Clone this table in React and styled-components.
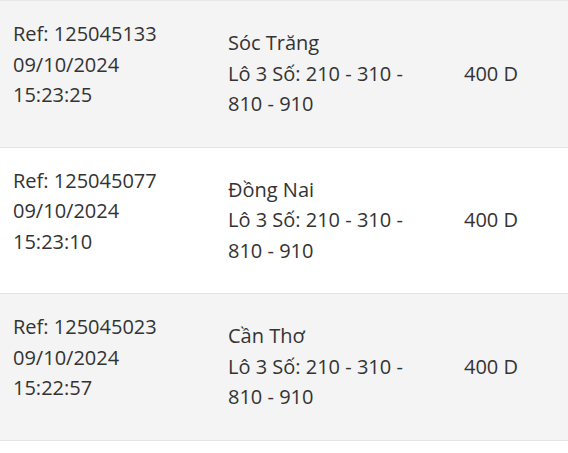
import styled, { createGlobalStyle } from "styled-components";

const GlobalStyle = createGlobalStyle`
  body {
    margin: 0;
    background: #ffffff;
    font-family: "Open Sans", "Liberation Sans", sans-serif;
  }
`;

const tickets = [
  {
    ref: "125045133",
    date: "09/10/2024",
    time: "15:23:25",
    province: "Sóc Trăng",
    numbers: "Lô 3 Số: 210 - 310 - 810 - 910",
    amount: "400 D",
  },
  {
    ref: "125045077",
    date: "09/10/2024",
    time: "15:23:10",
    province: "Đồng Nai",
    numbers: "Lô 3 Số: 210 - 310 - 810 - 910",
    amount: "400 D",
  },
  {
    ref: "125045023",
    date: "09/10/2024",
    time: "15:22:57",
    province: "Cần Thơ",
    numbers: "Lô 3 Số: 210 - 310 - 810 - 910",
    amount: "400 D",
  },
];

const App = () => {
  return (
    <>
      <GlobalStyle />
      <List>
        {tickets.map((t, index) => (
          <Row key={t.ref} $shaded={index % 2 === 0}>
            <RefCol>
              <Line>Ref: {t.ref}</Line>
              <Line>{t.date}</Line>
              <Line>{t.time}</Line>
            </RefCol>
            <InfoCol>
              <Line>{t.province}</Line>
              <Line>{t.numbers}</Line>
            </InfoCol>
            <Amount>{t.amount}</Amount>
          </Row>
        ))}
      </List>
    </>
  );
};

export default App;

const List = styled.div`
  display: flex;
  flex-direction: column;
  width: 568px;
  border-top: 1px solid #e8e8e8;
`;

const Row = styled.div`
  display: grid;
  grid-template-columns: 215px 236px 1fr;
  align-items: center;
  height: 146.67px;
  padding-left: 13px;
  box-sizing: border-box;
  background: ${(p) => (p.$shaded ? "#f4f4f4" : "#ffffff")};
  border-bottom: 1px solid #e4e4e4;
  color: #333333;
  font-size: 20px;
  line-height: 30.5px;
`;

const RefCol = styled.div`
  align-self: start;
  padding-top: 18px;
`;

const InfoCol = styled.div`
  width: 200px;
`;

const Line = styled.div``;

const Amount = styled.div``;
